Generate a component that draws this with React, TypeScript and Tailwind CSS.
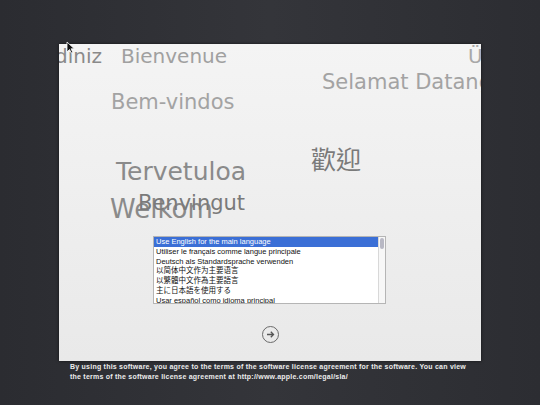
import React from "react";

const words: { t: string; x: number; y: number; s: number; c: string }[] = [
  { t: "diniz", x: -4, y: 2, s: 20, c: "#8a8a8a" },
  { t: "Bienvenue", x: 62, y: 2, s: 20, c: "#a0a0a0" },
  { t: "Ü", x: 409, y: 2, s: 20, c: "#a8a8a8" },
  { t: "Selamat Datang", x: 263, y: 28, s: 21, c: "#a3a3a3" },
  { t: "Bem-vindos", x: 52, y: 48, s: 21, c: "#a3a3a3" },
  { t: "Tervetuloa", x: 57, y: 115, s: 25, c: "#8a8a8a" },
  { t: "歡迎", x: 252, y: 104, s: 25, c: "#7a7a7a" },
  { t: "Welkom", x: 51, y: 152, s: 26, c: "#8a8a8a" },
  { t: "Benvingut", x: 79, y: 149, s: 21, c: "#7a7a7a" },
];

const langs = [
  "Use English for the main language",
  "Utiliser le français comme langue principale",
  "Deutsch als Standardsprache verwenden",
  "以简体中文作为主要语言",
  "以繁體中文作為主要語言",
  "主に日本語を使用する",
  "Usar español como idioma principal",
];

export default function App() {
  return (
    <div
      className="w-[540px] h-[405px] overflow-hidden relative bg-gradient-to-r from-[#2b2c31] via-[#34353a] to-[#2c2d32]"
      style={{ fontFamily: '"DejaVu Sans", "Noto Sans CJK TC", sans-serif' }}
    >
      <div className="pl-[59px] pt-[44px]">
        <div className="relative w-[422px] h-[317px] overflow-hidden bg-gradient-to-b from-[#f4f4f4] to-[#e9e9e9] shadow-[0_0_3px_rgba(0,0,0,0.6)] flex flex-col items-center">
          {words.map((w, i) => (
            <span
              key={i}
              className="absolute whitespace-nowrap leading-none"
              style={{ left: w.x, top: w.y, fontSize: w.s, color: w.c }}
            >
              {w.t}
            </span>
          ))}
          <div className="relative mt-[192px] ml-[-1px] w-[233px] h-[68px] bg-white border border-[#b5b5b5] overflow-hidden flex">
            <div className="flex-1 overflow-hidden" style={{ fontFamily: '"Liberation Sans", "Noto Sans CJK SC", sans-serif' }}>
              {langs.map((l, i) => (
                <div
                  key={i}
                  className={
                    "h-[9.8px] pl-[2px] text-[7.5px] leading-[9.8px] whitespace-nowrap " +
                    (i === 0 ? "bg-[#3b6fd6] text-white" : "text-[#111]")
                  }
                >
                  {l}
                </div>
              ))}
            </div>
            <div className="w-[7px] border-l border-[#d8d8d8] bg-[#f7f7f7] pt-[1px] flex justify-center">
              <div className="w-[4px] h-[11px] rounded-full bg-[#b8b8c4]" />
            </div>
          </div>
          <div className="mt-[22px] w-[17px] h-[17px] rounded-full border-[1.5px] border-[#6a6a6a] flex items-center justify-center">
            <svg width="9" height="9" viewBox="0 0 9 9">
              <path d="M1 4.5 H7.5 M4.8 1.8 L7.5 4.5 L4.8 7.2" stroke="#555" strokeWidth="1.3" fill="none" />
            </svg>
          </div>
        </div>
      </div>
      <div
        className="pl-[70px] pt-[1px] text-[7px] leading-[10px] font-bold text-[#ececec] tracking-[0.23px]"
        style={{ fontFamily: '"Liberation Sans", sans-serif' }}
      >
        <div className="whitespace-nowrap">
          By using this software, you agree to the terms of the software license agreement for the software. You can view
        </div>
        <div className="whitespace-nowrap">the terms of the software license agreement at http://www.apple.com/legal/sla/</div>
      </div>
      <svg className="absolute left-[66px] top-[41px]" width="9" height="13" viewBox="0 0 9 13">
        <path d="M1 1 L1 11 L3.5 8.5 L5.3 12 L6.8 11.3 L5 7.8 L8.3 7.8 Z" fill="#111" stroke="#fff" strokeWidth="0.8" />
      </svg>
    </div>
  );
}
